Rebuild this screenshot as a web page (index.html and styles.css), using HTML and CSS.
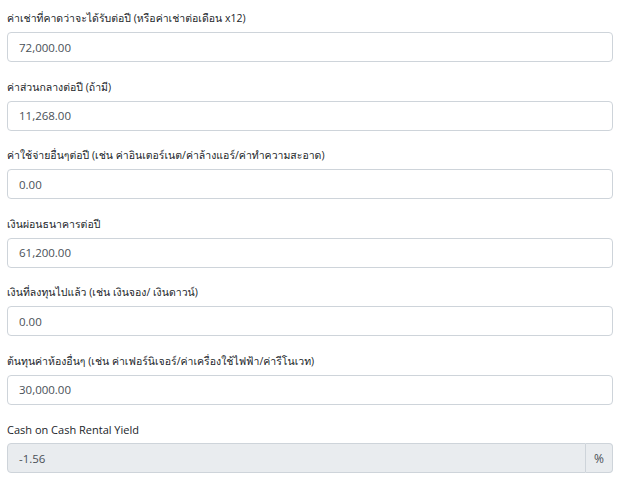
FILE: index.html
```html
<!DOCTYPE html>
<html lang="th">
<head>
<meta charset="utf-8">
<link rel="stylesheet" href="styles.css">
</head>
<body>
<form class="calc">
  <div class="group">
    <label class="label">ค่าเช่าที่คาดว่าจะได้รับต่อปี (หรือค่าเช่าต่อเดือน x12)</label>
    <input class="field" type="text" value="72,000.00">
  </div>
  <div class="group">
    <label class="label">ค่าส่วนกลางต่อปี (ถ้ามี)</label>
    <input class="field" type="text" value="11,268.00">
  </div>
  <div class="group">
    <label class="label">ค่าใช้จ่ายอื่นๆต่อปี (เช่น ค่าอินเตอร์เนต/ค่าล้างแอร์/ค่าทำความสะอาด)</label>
    <input class="field" type="text" value="0.00">
  </div>
  <div class="group">
    <label class="label">เงินผ่อนธนาคารต่อปี</label>
    <input class="field" type="text" value="61,200.00">
  </div>
  <div class="group">
    <label class="label">เงินที่ลงทุนไปแล้ว (เช่น เงินจอง/ เงินดาวน์)</label>
    <input class="field" type="text" value="0.00">
  </div>
  <div class="group">
    <label class="label">ต้นทุนค่าห้องอื่นๆ (เช่น ค่าเฟอร์นิเจอร์/ค่าเครื่องใช้ไฟฟ้า/ค่ารีโนเวท)</label>
    <input class="field" type="text" value="30,000.00">
  </div>
  <div class="group">
    <label class="label label-en">Cash on Cash Rental Yield</label>
    <div class="input-group">
      <input class="field field-readonly" type="text" value="-1.56" readonly>
      <span class="addon">%</span>
    </div>
  </div>
</form>
</body>
</html>
```

FILE: styles.css
```css
html, body {
  margin: 0;
  padding: 0;
  background: #ffffff;
}

body {
  font-family: "Segoe UI", "Open Sans", "Loma", "Noto Sans Thai", sans-serif;
  color: #212529;
}

.calc {
  display: flex;
  flex-direction: column;
  gap: 16.5px;
  padding: 10px 11px 0 7px;
}

.group {
  display: flex;
  flex-direction: column;
}

.label {
  font-size: 10.5px;
  line-height: 17px;
  margin-bottom: 5px;
  color: #212529;
}

.label-en {
  font-size: 11px;
}

.field {
  box-sizing: border-box;
  height: 30px;
  width: 100%;
  padding: 0 11px;
  border: 1px solid #ced4da;
  border-radius: 4px;
  font-family: inherit;
  font-size: 11.5px;
  color: #495057;
  background: #fff;
  outline: none;
}

.input-group {
  display: flex;
}

.field-readonly {
  flex: 1;
  background: #e9ecef;
  border-radius: 4px 0 0 4px;
}

.addon {
  box-sizing: border-box;
  width: 27px;
  height: 30px;
  display: flex;
  align-items: center;
  justify-content: center;
  border: 1px solid #ced4da;
  border-left: none;
  border-radius: 0 4px 4px 0;
  background: #e9ecef;
  font-size: 12px;
  color: #495057;
}
```
